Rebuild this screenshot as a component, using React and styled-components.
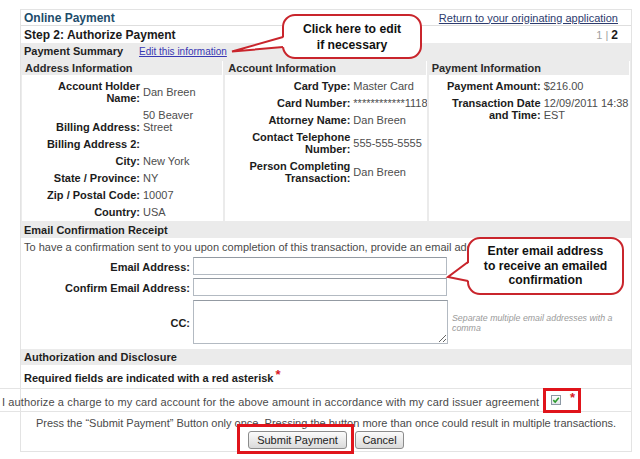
import React from "react";
import styled, { createGlobalStyle } from "styled-components";

const GlobalStyle = createGlobalStyle`
  body {
    margin: 0;
    background: #fff;
    font-family: "Liberation Sans", Arial, sans-serif;
  }
`;

const Page = styled.div`
  position: relative;
  width: 640px;
  height: 459px;
  overflow: hidden;
  box-sizing: border-box;
  padding: 9px 8px 0 20px;
`;

const Panel = styled.div`
  position: relative;
  width: 612px;
  box-sizing: border-box;
  border: 1px solid #e3e3e3;
  padding-bottom: 1px;
`;

const TopRow = styled.div`
  display: flex;
  justify-content: space-between;
  align-items: center;
  height: ${(p) => p.$h}px;
  padding: 0 13px 0 3px;
  border-bottom: ${(p) => (p.$line ? "1px solid #dedede" : "none")};
`;

const PageTitle = styled.span`
  font-size: 12px;
  font-weight: bold;
  color: ${(p) => p.$color || "#1a1a1a"};
`;

const ReturnLink = styled.a`
  font-size: 11px;
  color: #2d3c6e;
  text-decoration: underline;
`;

const Pager = styled.span`
  font-size: 11px;
  color: #a0a0a0;
  b {
    font-size: 12px;
    color: #1a1a1a;
  }
`;

const GrayBlock = styled.div`
  background: #ebebeb;
`;

const SectionBand = styled.div`
  display: flex;
  align-items: center;
  gap: 16px;
  height: 16px;
  padding-left: 3px;
  background: #ebebeb;
  font-size: 11px;
  font-weight: bold;
  color: #1f1f1f;
`;

const EditLink = styled.a`
  font-size: 10px;
  font-weight: normal;
  color: #3838b4;
  text-decoration: underline;
`;

const Columns = styled.div`
  display: grid;
  grid-template-columns: repeat(3, 1fr);
  gap: 2px;
  padding: 2px 1px 1px;
`;

const Column = styled.div`
  background: #fff;
  overflow: hidden;
`;

const ColHeader = styled.div`
  height: 14px;
  line-height: 14px;
  padding-left: 3px;
  background: #ebebeb;
  border-right: 1px solid #fff;
  border-bottom: 1px solid #fff;
  font-size: 11px;
  font-weight: bold;
  color: #2a2a2a;
`;

const FieldGrid = styled.div`
  display: grid;
  grid-template-columns: ${(p) => p.$label}px 1fr;
  column-gap: 3px;
  row-gap: 5px;
  padding: 4px 0 3px;
  font-size: 11px;
  line-height: 12px;
`;

const Label = styled.div`
  align-self: end;
  text-align: right;
  font-weight: bold;
  color: #1c1c1c;
`;

const Value = styled.div`
  align-self: center;
  white-space: nowrap;
  color: #4d4d4d;
`;

const WhiteBody = styled.div`
  background: #fff;
  padding: 3px 3px 5px;
`;

const Intro = styled.div`
  font-size: 11px;
  line-height: 12px;
  color: #4a4a4a;
  white-space: nowrap;
`;

const FormGrid = styled.div`
  display: grid;
  grid-template-columns: 166px 255px 1fr;
  column-gap: 3px;
  row-gap: 3px;
  margin-top: 4px;
`;

const FormLabel = styled.label`
  align-self: center;
  padding-top: 2px;
  text-align: right;
  font-size: 11px;
  font-weight: bold;
  color: #1c1c1c;
`;

const TextInput = styled.input`
  width: 254px;
  height: 18px;
  box-sizing: border-box;
  margin: 0;
  border: 1px solid #b3bac2;
  border-top-color: #939aa2;
  background: #fff;
`;

const TextArea = styled.textarea`
  width: 255px;
  height: 44px;
  box-sizing: border-box;
  margin: 1px 0 0;
  border: 1px solid #b3bac2;
  border-top-color: #939aa2;
  resize: both;
`;

const Hint = styled.div`
  align-self: center;
  padding: 3px 0 0 1px;
  font-size: 8.8px;
  line-height: 10.5px;
  font-style: italic;
  color: #9a9a9a;
`;

const RequiredRow = styled.div`
  padding: 7px 3px 4px;
  font-size: 11px;
  line-height: 12px;
  font-weight: bold;
  color: #1c1c1c;
`;

const RedStar = styled.span`
  position: relative;
  top: ${(p) => p.$raise || 0}px;
  margin-left: ${(p) => p.$gap || 0}px;
  font-size: 13px;
  font-weight: bold;
  line-height: 10px;
  color: #d8181e;
`;

const AuthorizeRow = styled.div`
  display: flex;
  align-items: center;
  height: 24px;
  box-sizing: border-box;
  margin-left: -21px;
  padding: 3px 0 0 2px;
  border-top: 1px solid #e4e4e4;
  border-bottom: 1px solid #e4e4e4;
  font-size: 11px;
  line-height: 12px;
  letter-spacing: 0.12px;
  color: #4a4a4a;
  white-space: nowrap;
`;

const CheckWrap = styled.span`
  position: relative;
  display: inline-flex;
  align-items: center;
  gap: 9px;
  margin-left: 12px;
  margin-top: -4px;
`;

const CheckBox = styled.span`
  display: inline-flex;
  align-items: center;
  justify-content: center;
  width: 10px;
  height: 10px;
  box-sizing: border-box;
  border: 1px solid #8c98a4;
  background: linear-gradient(#fdfdfd, #e2e6ea);
`;

const Highlight = styled.span`
  position: absolute;
  top: ${(p) => p.$t}px;
  right: ${(p) => p.$r}px;
  bottom: ${(p) => p.$b}px;
  left: ${(p) => p.$l}px;
  border: 3px solid #e0141b;
  pointer-events: none;
`;

const PressRow = styled.div`
  padding-top: 5px;
  text-align: center;
  font-size: 11px;
  line-height: 12px;
  color: #4a4a4a;
`;

const Buttons = styled.div`
  display: flex;
  justify-content: center;
  gap: 8px;
  margin-top: 2px;
  padding-bottom: 1px;
`;

const ButtonSlot = styled.span`
  position: relative;
  display: inline-flex;
`;

const Button = styled.button`
  width: ${(p) => p.$w}px;
  height: 18px;
  padding: 0;
  border: 1px solid #8c8c8c;
  border-radius: 3px;
  background: linear-gradient(#fbfbfb, #dadada);
  font-family: "Liberation Sans", Arial, sans-serif;
  font-size: 11px;
  color: #222;
`;

const Callout = styled.div`
  position: absolute;
  left: ${(p) => p.$x}px;
  top: ${(p) => p.$y}px;
  width: ${(p) => p.$w}px;
  height: ${(p) => p.$h}px;
  box-sizing: border-box;
  display: flex;
  align-items: center;
  justify-content: center;
  text-align: center;
  border: 2px solid #c9252c;
  border-radius: 13px;
  background: #fff;
  font-size: 12.2px;
  line-height: ${(p) => p.$lh}px;
  font-weight: bold;
  color: #111;
`;

const Tail = styled.svg`
  position: absolute;
  left: ${(p) => p.$x}px;
  top: ${(p) => p.$y}px;
  overflow: visible;
`;

const address = [
  ["Account Holder", "Name:", "Dan Breen"],
  ["Billing Address:", null, "50 Beaver", "Street"],
  ["Billing Address 2:", null, ""],
  ["City:", null, "New York"],
  ["State / Province:", null, "NY"],
  ["Zip / Postal Code:", null, "10007"],
  ["Country:", null, "USA"],
];

const account = [
  ["Card Type:", null, "Master Card"],
  ["Card Number:", null, "************1118"],
  ["Attorney Name:", null, "Dan Breen"],
  ["Contact Telephone", "Number:", "555-555-5555"],
  ["Person Completing", "Transaction:", "Dan Breen"],
];

const payment = [
  ["Payment Amount:", null, "$216.00"],
  ["Transaction Date", "and Time:", "12/09/2011 14:38", "EST"],
];

const InfoColumn = ({ title, rows, labelWidth }) => (
  <Column>
    <ColHeader>{title}</ColHeader>
    <FieldGrid $label={labelWidth}>
      {rows.map(([l1, l2, v1, v2]) => (
        <React.Fragment key={l1}>
          <Label>
            {l1}
            {l2 && <br />}
            {l2}
          </Label>
          <Value>
            {v1}
            {v2 && <br />}
            {v2}
          </Value>
        </React.Fragment>
      ))}
    </FieldGrid>
  </Column>
);

const App = () => {
  return (
    <Page>
      <GlobalStyle />
      <Panel>
        <TopRow $h={15} $line>
          <PageTitle $color="#1e4d6b">Online Payment</PageTitle>
          <ReturnLink href="#">Return to your originating application</ReturnLink>
        </TopRow>
        <TopRow $h={17}>
          <PageTitle>Step 2: Authorize Payment</PageTitle>
          <Pager>
            1 | <b>2</b>
          </Pager>
        </TopRow>

        <GrayBlock>
          <SectionBand>
            Payment Summary
            <EditLink href="#">Edit this information</EditLink>
          </SectionBand>
          <Columns>
            <InfoColumn title="Address Information" rows={address} labelWidth={118} />
            <InfoColumn title="Account Information" rows={account} labelWidth={125} />
            <InfoColumn title="Payment Information" rows={payment} labelWidth={112} />
          </Columns>
        </GrayBlock>

        <SectionBand>Email Confirmation Receipt</SectionBand>
        <WhiteBody>
          <Intro>
            To have a confirmation sent to you upon completion of this transaction, provide an
            email addr
          </Intro>
          <FormGrid>
            <FormLabel>Email Address:</FormLabel>
            <TextInput type="text" />
            <span />
            <FormLabel>Confirm Email Address:</FormLabel>
            <TextInput type="text" />
            <span />
            <FormLabel>CC:</FormLabel>
            <TextArea />
            <Hint>
              Separate multiple email addresses with a
              <br />
              comma
            </Hint>
          </FormGrid>
        </WhiteBody>

        <SectionBand>Authorization and Disclosure</SectionBand>
        <RequiredRow>
          Required fields are indicated with a red asterisk
          <RedStar $gap={2} $raise={-3}>*</RedStar>
        </RequiredRow>
        <AuthorizeRow>
          I authorize a charge to my card account for the above amount in accordance with my
          card issuer agreement
          <CheckWrap>
            <CheckBox>
              <svg width="8" height="8" viewBox="0 0 8 8">
                <path d="M1.3 4.2 L3.2 6 L6.8 1.8" fill="none" stroke="#2b9a2b" strokeWidth="1.6" />
              </svg>
            </CheckBox>
            <RedStar $raise={-2}>*</RedStar>
            <Highlight $t={-7} $r={-6} $b={-8} $l={-8} />
          </CheckWrap>
        </AuthorizeRow>
        <PressRow>
          Press the “Submit Payment” Button only once. Pressing the button more than once could
          result in multiple transactions.
        </PressRow>
        <Buttons>
          <ButtonSlot>
            <Button $w={99}>Submit Payment</Button>
            <Highlight $t={-7} $r={-7} $b={-5} $l={-11} />
          </ButtonSlot>
          <ButtonSlot>
            <Button $w={49}>Cancel</Button>
          </ButtonSlot>
        </Buttons>
      </Panel>

      <Callout $x={282} $y={14} $w={140} $h={45} $lh={16}>
        <Tail $x={-56} $y={17} width="60" height="22">
          <polygon points="57,4 4,18.5 57,14" fill="#fff" />
          <polyline points="55,4 4,18.5 55,14" fill="none" stroke="#c9252c" strokeWidth="2" />
        </Tail>
        <div>
          Click here to edit
          <br />
          if necessary
        </div>
      </Callout>

      <Callout $x={467} $y={237} $w={157} $h={58} $lh={14.5}>
        <Tail $x={-25} $y={19} width="30" height="32">
          <polygon points="26,4 4,19 26,23" fill="#fff" />
          <polyline points="24,4 4,19 24,23" fill="none" stroke="#c9252c" strokeWidth="2" />
        </Tail>
        <div>
          Enter email address
          <br />
          to receive an emailed
          <br />
          confirmation
        </div>
      </Callout>
    </Page>
  );
};

export default App;
